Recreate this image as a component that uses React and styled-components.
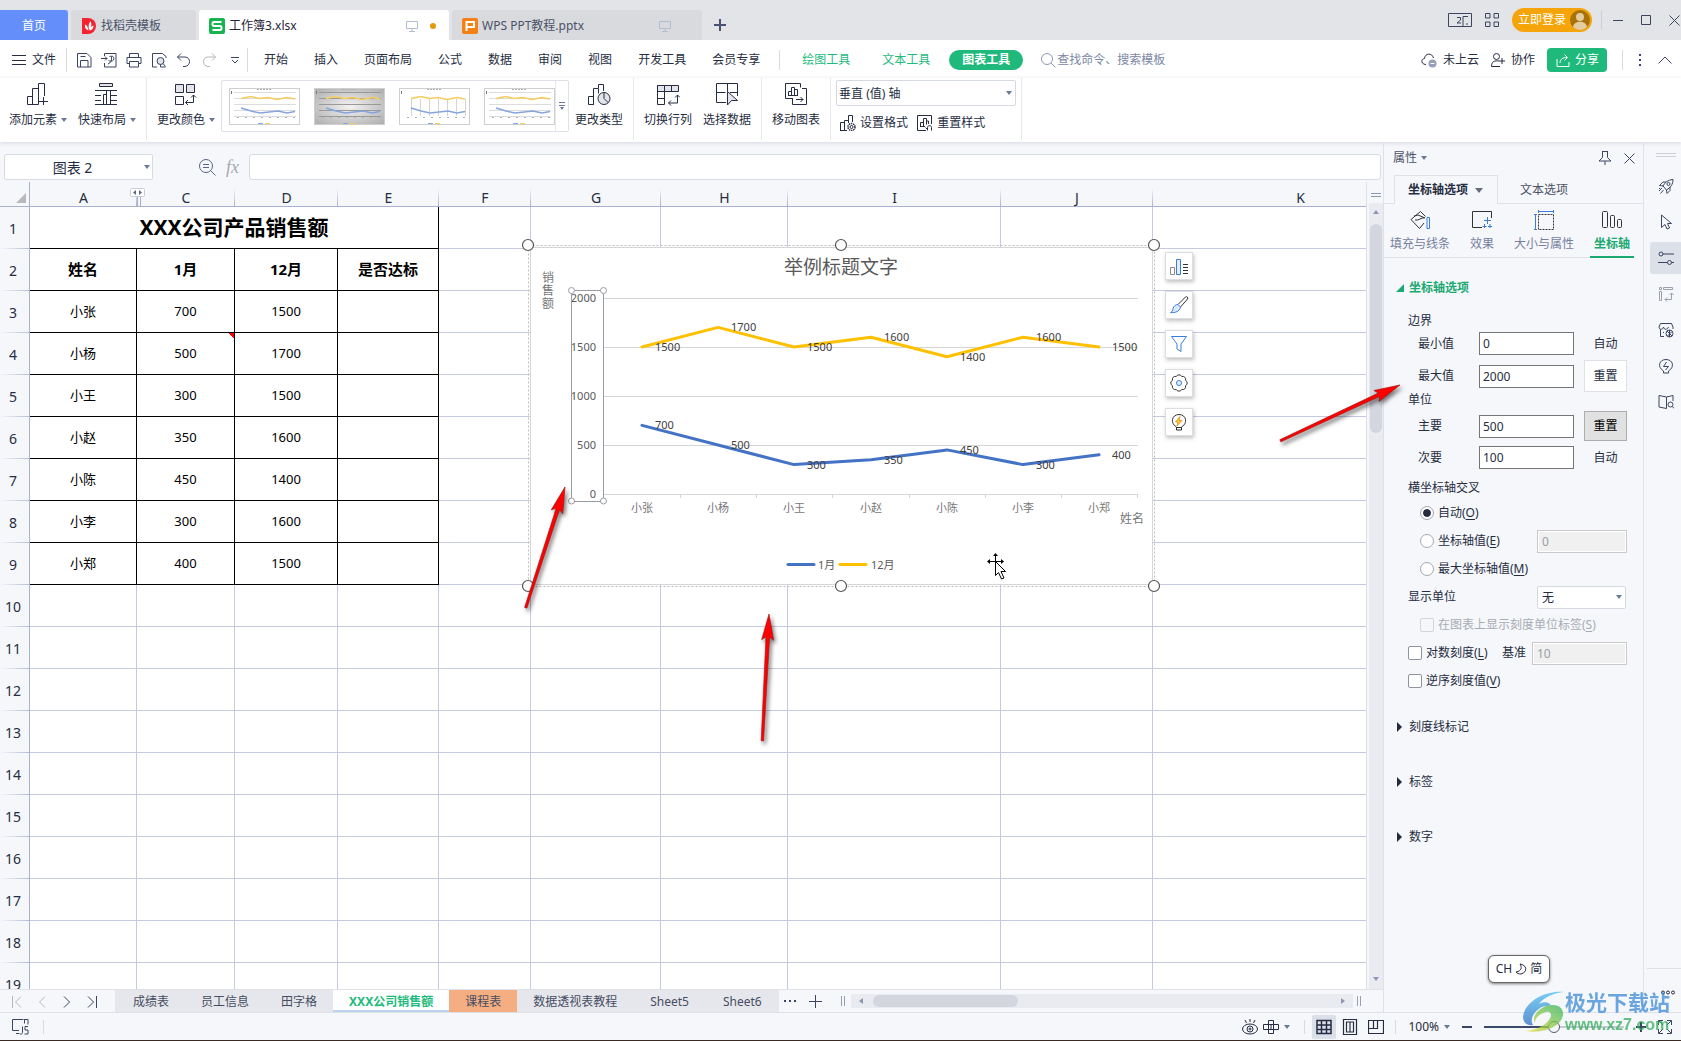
import React, { useState } from 'react'
import styled, { createGlobalStyle, css } from 'styled-components'

const columns = [
  { name: 'A', width: 107 },
  { name: 'C', width: 98 },
  { name: 'D', width: 103 },
  { name: 'E', width: 101 },
  { name: 'F', width: 92 },
  { name: 'G', width: 130 },
  { name: 'H', width: 127 },
  { name: 'I', width: 213 },
  { name: 'J', width: 152 },
  { name: 'K', width: 295 }
]

const people = [
  { name: '小张', jan: 700, dec: 1500 },
  { name: '小杨', jan: 500, dec: 1700, note: true },
  { name: '小王', jan: 300, dec: 1500 },
  { name: '小赵', jan: 350, dec: 1600 },
  { name: '小陈', jan: 450, dec: 1400 },
  { name: '小李', jan: 300, dec: 1600 },
  { name: '小郑', jan: 400, dec: 1500 }
]

const menus = [
  '开始',
  '插入',
  '页面布局',
  '公式',
  '数据',
  '审阅',
  '视图',
  '开发工具',
  '会员专享'
]

const sheets = [
  '成绩表',
  '员工信息',
  '田字格',
  'XXX公司销售额',
  '课程表',
  '数据透视表教程',
  'Sheet5',
  'Sheet6'
]

/* ---------- icons ---------- */

const Icon = ({ w = 16, h = w, children, ...rest }) => (
  <svg
    width={w}
    height={h}
    viewBox={`0 0 ${w} ${h}`}
    fill="none"
    stroke="currentColor"
    aria-hidden="true"
    {...rest}
  >
    {children}
  </svg>
)

const Caret = () => (
  <Icon w={6} h={4}>
    <path d="M0 0h6L3 4z" fill="#6b7896" stroke="none" />
  </Icon>
)

const MonitorIcon = () => (
  <Icon w={12} h={12} color="#b4bcd3">
    <path d="M.5 1.5h11v7H.5zM6 8.5v3M3 11.5h6" />
  </Icon>
)

const quickIcons = [
  {
    label: '保存',
    art: (
      <>
        <path d="M1.5 15V1.5H11L15 5.5V15z" />
        <path d="M4.5 15V8.5h7.5V15M4.5 4.5h5" />
      </>
    )
  },
  {
    label: '输出为PDF',
    art: (
      <>
        <path d="M3.5 4V1.5H15v13.5H3.5V11M0 6.5h6M4 4.5l2 2-2 2" />
        <path d="M7 12c3-1 4-4 3.5-7.5M8.5 4.5c4-1 5 1 4 3.5-1 1.5-4 1.5-5 .5" />
      </>
    )
  },
  {
    label: '打印',
    art: (
      <>
        <path d="M3.5 5.5V1.5h9v4M3.5 11.5h-2.5v-6h14v6h-2.5" />
        <path d="M3.5 9.5h9V15h-9z" />
      </>
    )
  },
  {
    label: '打印预览',
    art: (
      <>
        <path d="M6 15H1.5V1.5h10L15 4.5V6" />
        <circle cx="9.5" cy="9" r="3.5" fill="#dfe2e8" />
        <path d="M12 11.5l2.5 3M9.5 12.5v2.5h5" />
      </>
    )
  },
  {
    label: '撤销',
    art: <path d="M5 1.5L1.5 5 5 8.5M1.5 5H9c6 0 6 9 0 9.5H7" />
  },
  {
    label: '恢复',
    faded: true,
    art: <path d="M11 1.5L14.5 5 11 8.5M14.5 5H7c-6 0-6 9 0 9.5h2" />
  }
]

const ribbonIcons = {
  add: (
    <path d="M1.5 22.5v-8h5M6.5 22.5v-16H13M1.5 22.5h11M12.5 22.5v-21h6V14M17.5 15v8M13 19.5h9" />
  ),
  layout: (
    <>
      <path d="M4.5 1.5h13v3h-13z" fill="#e3e5ea" />
      <path d="M0 8.5h22M0 13.5h6M16 13.5h6M0 18.5h6M16 18.5h6M0 22.5h22M8.5 22V12.5h3V22M11.5 22V8.5h4V22" />
    </>
  ),
  color: (
    <>
      <path d="M1.5 2.5h8v8h-8zM12.5 2.5h8v8h-8z" fill="#e3e5ea" />
      <path d="M1.5 14.5h8v8h-8zM19.5 13v7.5h-8M17 15.5l2.5-2.5 2.5 2.5M14 18l-2.5 2.5L14 23" />
    </>
  ),
  type: (
    <>
      <path d="M1.5 22.5v-8h5v8zM6.5 22.5v-16h5v5M11.5 6V2.5h5V9" />
      <circle cx="17" cy="16.5" r="6" fill="#e3e5ea" />
      <path d="M17 10.5v6l4 4" />
    </>
  ),
  swap: (
    <>
      <path d="M1.5 3.5h21v6h-21z" fill="#e3e5ea" />
      <path d="M8.5 3.5v19h-7v-19M15.5 3.5v6M1.5 16.5h7M21.5 13v8h-9M19 15.5l2.5-2.5 2.5 2.5M15 18.5l-2.5 2.5 2.5 2.5" />
    </>
  ),
  pick: (
    <>
      <path d="M11 20.5H1.5v-19h21V14M12.5 1.5v8M1.5 10.5h9M15 10.5h7.5" />
      <path d="M12.5 9.5v13.5l4-4.5h6z" fill="#e3e5ea" />
    </>
  ),
  move: (
    <>
      <path d="M9 16.5H1.5v-15h15v4M18 6.5h4.5v16h-14v-6M12 17.5h7M16.5 15l2.5 2.5L16.5 20" />
      <path d="M4.5 13.5V9.5h3v4M7.5 13.5v-8h3v8M10.5 13.5v-6h3v6M4 13.5h10" />
    </>
  )
}

const railIcons = [
  {
    label: '快捷',
    art: (
      <>
        <path d="M5 8c2-4 5-6 10-6.5 0 5-2.5 8-6.5 10.5L5 8zM5 8L1.5 7.5 5 4h3M8.5 12l.5 3.5 3-3V9" />
        <circle cx="10.5" cy="6" r="1.5" />
        <path d="M4 10l-3 3M5.5 12l-3 3.5M2 10l-1 1" />
      </>
    )
  },
  {
    label: '选择',
    art: <path d="M3.5 1v12.5L7 10.5l2 4.5 2.5-1-2-4.5h4z" />
  },
  {
    label: '属性',
    active: true,
    art: (
      <>
        <circle cx="3" cy="4" r="2" />
        <circle cx="11.5" cy="12.5" r="2" />
        <path d="M5 4h11M0 12.5h9.5M13.5 12.5H16" />
      </>
    )
  },
  {
    label: '分析',
    faded: true,
    art: (
      <path d="M1.5 1.5h2v2h-2zM5.5 1.5h9v2h-9zM1.5 5.5h2v9h-2zM13.5 7v6.5H7M11.5 9l2-2 2 2M9 11.5l-2 2 2 2" />
    )
  },
  {
    label: '素材',
    art: (
      <>
        <path d="M6 14.5H2.5v-7M1 5l1.5-3.5h11L15 5v2M1 5c0 3 4 3 4.5 0 .5 3 4 3 5 0M5 10.5h1" />
        <circle cx="11.5" cy="11.5" r="3.5" />
        <path d="M9 9l5 5M14 9.5l-4.5 4.5M11.5 8v7" />
      </>
    )
  },
  {
    label: '智能',
    art: (
      <>
        <path d="M5.5 13C-1 9 1 1.5 8 1.5S17 9 10.5 13v2h-5z" />
        <path d="M8.5 4L5.5 8.5h5L7.5 12" />
      </>
    )
  },
  {
    label: '帮助',
    art: (
      <>
        <path d="M8.5 14.5L1 13V1.5l7.5 1.5V14.5M8.5 3l6.5-1.5V7" />
        <circle cx="12.5" cy="10.5" r="2.5" />
        <path d="M14.5 12.5l1.5 2" />
      </>
    )
  }
]

const floatTools = [
  {
    label: '图表元素',
    art: (
      <>
        <path d="M1.5 11.5h4v7h-4z" stroke="#8b8b8b" />
        <path d="M7.5 3.5h4v15h-4z" stroke="#3b7ddb" fill="#e4eefb" />
        <path d="M14 8.5h5M14 11.5h5M14 14.5h5M14 17.5h5" stroke="#333" />
      </>
    )
  },
  {
    label: '图表样式',
    art: (
      <>
        <path d="M9 9.5L16.5 2c1.5-1 3 .5 2 2L11.5 12" stroke="#333" />
        <path
          d="M9 9.5l2.5 2.5c-1 4.5-5 6-10 5.5 2-1 2-2 2.5-4 1-3 3-4 5-4z"
          stroke="#3b7ddb"
          fill="#dbe8fa"
        />
      </>
    )
  },
  {
    label: '图表筛选器',
    art: <path d="M2.5 2.5h15L12 10v7.5l-4-2.5v-5z" stroke="#3b7ddb" />
  },
  {
    label: '设置',
    art: (
      <>
        <path
          d="M16.5 12.7A3 3 0 0112.7 16.5A3 3 0 017.3 16.5A3 3 0 013.5 12.7A3 3 0 013.5 7.3A3 3 0 017.3 3.5A3 3 0 0112.7 3.5A3 3 0 0116.5 7.3A3 3 0 0116.5 12.7z"
          stroke="#333"
        />
        <circle cx="10" cy="10" r="2.5" stroke="#3b7ddb" fill="#e4eefb" />
      </>
    )
  },
  {
    label: '智能推荐',
    art: (
      <>
        <path d="M7.5 15C1 11.5 2.5 2.5 10 2.5S19 11.5 12.5 15v3h-5zM7.5 15.5h5" stroke="#333" />
        <path d="M11 4.5L6.5 10H9l-1 4 5-5.5h-3z" fill="#ffc83d" stroke="#d98a00" strokeWidth=".7" />
      </>
    )
  }
]

/* ---------- chart ---------- */

const pointX = i => 642 + Math.round(i * 76.2)
const valueY = v => 494 - (v * 49) / 500

const line = key =>
  people.map((p, i) => `${pointX(i)},${valueY(p[key])}`).join(' ')

const SalesChart = () => (
  <Chart viewBox="520 237 642 357" width="642" height="357" role="img" aria-label="举例标题文字">
    <rect x="528.5" y="245.5" width="626" height="341" fill="none" stroke="#bdbdc4" strokeDasharray="2 2" />
    <rect x="530.5" y="247.5" width="622" height="337" fill="#fff" stroke="#d6d6d6" />
    <text x="841" y="274" fontSize="19" textAnchor="middle">举例标题文字</text>
    {['销', '售', '额'].map((c, i) => (
      <text key={c} x="548" y={282 + i * 13} fontSize="12" textAnchor="middle" fill="#777">
        {c}
      </text>
    ))}
    {[2000, 1500, 1000, 500, 0].map((v, i) => (
      <g key={v}>
        <path d={`M604 ${298.5 + i * 49}H1138`} stroke="#d6d6d6" />
        <text x="596" y={302 + i * 49} textAnchor="end">{v}</text>
      </g>
    ))}
    {[680, 756, 832, 909, 985, 1061, 1137].map(x => (
      <path key={x} d={`M${x + 0.5} 494v4`} stroke="#d6d6d6" />
    ))}
    <g fill="none" strokeWidth="3" strokeLinecap="round" strokeLinejoin="round">
      <polyline points={line('dec')} stroke="#ffc000" />
      <polyline points={line('jan')} stroke="#4472c4" />
    </g>
    {people.map((p, i) => (
      <g key={p.name}>
        <text x={pointX(i) + 13} y={valueY(p.dec) + 4} fill="#404040">{p.dec}</text>
        <text x={pointX(i) + 13} y={valueY(p.jan) + 4} fill="#404040">{p.jan}</text>
        <text x={pointX(i)} y="512" textAnchor="middle" fill="#777">{p.name}</text>
      </g>
    ))}
    <text x="1120" y="523" fontSize="12" fill="#777">姓名</text>
    <g strokeWidth="3" strokeLinecap="round">
      <path d="M788 564.5h26" stroke="#4472c4" />
      <path d="M840 564.5h26" stroke="#ffc000" />
    </g>
    <text x="818" y="569">1月</text>
    <text x="871" y="569">12月</text>
    <g fill="#fff" stroke="#9a9aa2">
      <rect x="571.5" y="290.5" width="32" height="211" fill="none" />
      <circle cx="571.5" cy="290.5" r="3" />
      <circle cx="603.5" cy="290.5" r="3" />
      <circle cx="571.5" cy="501" r="3" />
      <circle cx="603.5" cy="501" r="3" />
    </g>
    <g fill="#fff" stroke="#555" strokeWidth="1.2">
      {[528, 841, 1154].map(x => (
        <g key={x}>
          <circle cx={x} cy="245" r="5.5" />
          <circle cx={x} cy="586" r="5.5" />
        </g>
      ))}
    </g>
    {/* move pointer */}
    <path d="M988 561.5h15M995.5 554v13" stroke="#000" />
    <path
      d="M987 561.5l3-2.5v5zM1004 561.5l-3-2.5v5zM995.5 553l-2.5 3h5z"
      fill="#000"
    />
    <path
      d="M995.5 561.5v14l3-3 3 6.5 2.5-1-3-6.5h4.5z"
      fill="#fff"
      stroke="#000"
    />
  </Chart>
)

const RedArrow = ({ x, y, length, angle }) => (
  <path
    transform={`translate(${x} ${y}) rotate(${angle})`}
    d={`M0 0L-26 6L-23 1.8L${-length} 1.2V-1.2L-23 -1.8L-26 -6Z`}
  />
)

const MiniChart = ({ dark, bars }) => (
  <Icon w={71} h={37}>
    <defs>
      <radialGradient id="shade" r=".8">
        <stop offset="0" stopColor="#f2f2f2" />
        <stop offset="1" stopColor="#a3a3a3" />
      </radialGradient>
    </defs>
    <rect x=".5" y=".5" width="70" height="36" fill={dark ? 'url(#shade)' : '#fff'} stroke="#cfcfcf" />
    {bars ? (
      <path d="M12.5 11v17M21.5 11v17M30.5 11v17M39.5 11v17M48.5 11v17M57.5 11v17M66.5 11v17" stroke="#d5d5d5" />
    ) : (
      <path d="M5 4.5h62M5 10.5h62M5 16.5h62M5 22.5h62M5 28.5h62" stroke={dark ? '#9a9a9a' : '#dcdcdc'} />
    )}
    <path d="M28 1.5h14" stroke="#b0b0b0" strokeDasharray="2 1" />
    <path d="M2.5 3v3" stroke="#777" />
    <path d="M12 10.5l10-2 8 2 9-1 9 2 10-2 8 1.5" stroke="#f6cd5c" strokeWidth="1.5" />
    <path d="M12 20l10 3 9 2 9-1 9-1 9 2 8-1.5" stroke="#86a5dc" strokeWidth="1.5" />
    <path d="M8 29.5h58" stroke="#b0b0b0" strokeDasharray="2 6" />
    <path d="M29 35.5h5" stroke="#86a5dc" />
    <path d="M36 35.5h5" stroke="#f6cd5c" />
  </Icon>
)

/* ---------- regions ---------- */

const TitleBar = () => (
  <Title>
    <HomeTab>首页</HomeTab>
    <FileTab $width={125}>
      <Icon w={16}>
        <path d="M1 0h6a8 8 0 010 16H1z" fill="#f5232f" stroke="none" />
        <path d="M7.5 12.5C3.5 11 4 8 4 6.5c2 .5 3 2.5 3.5 6zM8 12C7 8 8 5 9.5 3c1.5 3 1 6-1.5 9zM8.5 12.5c.5-3 2-4.5 4-5 0 3-1.5 4.5-4 5z" fill="#fff" stroke="none" />
      </Icon>
      <span>找稻壳模板</span>
    </FileTab>
    <FileTab $width={250} $active>
      <Icon w={16}>
        <rect width="16" height="16" rx="2" fill="#17b34f" stroke="none" />
        <path d="M12.5 4H5C3 4 3 8 5 8h6c2 0 2 4 0 4H3.5" stroke="#fff" strokeWidth="2" />
      </Icon>
      <span>工作簿3.xlsx</span>
      <TabEnd>
        <MonitorIcon />
        <UnsavedDot />
      </TabEnd>
    </FileTab>
    <FileTab $width={250}>
      <Icon w={16}>
        <rect width="16" height="16" rx="2" fill="#f58013" stroke="none" />
        <path d="M4.5 13V4H12v5H5" stroke="#fff" strokeWidth="2" />
      </Icon>
      <span>WPS PPT教程.pptx</span>
      <TabEnd>
        <MonitorIcon />
        <DotSpace />
      </TabEnd>
    </FileTab>
    <NewTab aria-label="新建">
      <Icon w={12} strokeWidth="2">
        <path d="M6 0v12M0 6h12" />
      </Icon>
    </NewTab>
    <WindowTools>
      <IconButton aria-label="窗口数">
        <Icon w={24} h={14}>
          <path d="M15 13.5H.5V.5h23v13H15V3.5h5" />
          <path d="M9 4.5h3.5V7L9 10h4M18 11h2" />
        </Icon>
      </IconButton>
      <IconButton aria-label="应用">
        <Icon w={14}>
          <path d="M.5.5H5V5H.5zM9 .5h4.5V5H9zM.5 9H5v4.500H.5zM9 9h4.500v4.500H9z" />
        </Icon>
      </IconButton>
      <Login>
        立即登录
        <Icon w={20}>
          <circle cx="10" cy="10" r="10" fill="#a97208" stroke="none" />
          <circle cx="10" cy="7" r="4" fill="#e3cda0" stroke="none" />
          <path d="M3 17c1-7 13-7 14 0-4 4-10 4-14 0z" fill="#e3cda0" stroke="none" />
        </Icon>
      </Login>
      <WindowButtons>
        <IconButton aria-label="最小化">
          <Icon w={10}>
            <path d="M0 5.5h10" />
          </Icon>
        </IconButton>
        <IconButton aria-label="最大化">
          <Icon w={10}>
            <path d="M.5.5h9v9h-9z" />
          </Icon>
        </IconButton>
        <IconButton aria-label="关闭">
          <Icon w={11}>
            <path d="M.5.5l10 10M10.5.5l-10 10" />
          </Icon>
        </IconButton>
      </WindowButtons>
    </WindowTools>
  </Title>
)

const MenuBar = () => (
  <Menu>
    <MenuButton>
      <Icon w={14} h={12}>
        <path d="M0 1.5h14M0 6.5h14M0 10.5h14" />
      </Icon>
      文件
    </MenuButton>
    <Divider $height={24} />
    <QuickAccess>
      {quickIcons.map(q => (
        <IconButton key={q.label} aria-label={q.label} $faded={q.faded}>
          <Icon w={16}>{q.art}</Icon>
        </IconButton>
      ))}
    </QuickAccess>
    <IconButton aria-label="更多">
      <Icon w={8}>
        <path d="M0 1.5h8M1 4l3 3 3-3" />
      </Icon>
    </IconButton>
    <Divider $height={24} />
    <MenuItems>
      {menus.map(m => (
        <MenuItem key={m}>{m}</MenuItem>
      ))}
    </MenuItems>
    <Divider $height={20} />
    <ContextItems>
      <MenuItem $green>绘图工具</MenuItem>
      <MenuItem $green>文本工具</MenuItem>
    </ContextItems>
    <ActiveMenu>图表工具</ActiveMenu>
    <Search>
      <Icon w={15}>
        <circle cx="6" cy="6" r="5.5" />
        <path d="M10 10l4.5 4.5" />
      </Icon>
      <input placeholder="查找命令、搜索模板" aria-label="查找命令" />
    </Search>
    <MenuRight>
      <MenuButton>
        <Icon w={16}>
          <path d="M5 12.5C0 12.5-.5 7 3.5 6.5 4 1 11 .5 12.5 6" />
          <circle cx="11.5" cy="11.5" r="4" fill="#98a0b8" stroke="none" />
          <path d="M9.5 11.5h4" stroke="#fff" />
        </Icon>
        未上云
      </MenuButton>
      <MenuButton>
        <Icon w={14}>
          <circle cx="5.5" cy="3.5" r="3" />
          <path d="M9 13.5H.5C.5 8 4 7.5 8 8M11 5v6M8 8h6" />
        </Icon>
        协作
      </MenuButton>
      <Share>
        <Icon w={14}>
          <path d="M1 6v7.5h12V9M4 10c0-4 3-5.5 7-5.5M8.5 1.5l3 3-3 3" />
        </Icon>
        分享
      </Share>
      <Divider $height={20} />
      <IconButton aria-label="更多选项">
        <Icon w={2} h={14}>
          <path d="M1 1v2M1 6v2M1 11v2" strokeWidth="2" />
        </Icon>
      </IconButton>
      <IconButton aria-label="收起功能区">
        <Icon w={14} h={8}>
          <path d="M.5 7.5l6.5-6.5 6.5 6.5" />
        </Icon>
      </IconButton>
    </MenuRight>
  </Menu>
)

const RibbonButton = ({ icon, label, menu }) => (
  <BigButton>
    <Icon w={24}>{ribbonIcons[icon]}</Icon>
    <span>
      {label}
      {menu && <Caret />}
    </span>
  </BigButton>
)

const RibbonBar = () => (
  <Ribbon>
    <RibbonGroup>
      <RibbonButton icon="add" label="添加元素" menu />
      <RibbonButton icon="layout" label="快速布局" menu />
    </RibbonGroup>
    <RibbonGroup $tight>
      <RibbonButton icon="color" label="更改颜色" menu />
      <Gallery>
        <MiniChart />
        <MiniChart dark />
        <MiniChart bars />
        <MiniChart />
        <GalleryMore aria-label="更多样式">
          <Icon w={6} h={8}>
            <path d="M0 .5h6M0 3.5h6" />
            <path d="M1 5h4L3 8z" fill="currentColor" stroke="none" />
          </Icon>
        </GalleryMore>
      </Gallery>
      <RibbonButton icon="type" label="更改类型" />
    </RibbonGroup>
    <RibbonGroup>
      <RibbonButton icon="swap" label="切换行列" />
      <RibbonButton icon="pick" label="选择数据" />
    </RibbonGroup>
    <RibbonGroup>
      <RibbonButton icon="move" label="移动图表" />
    </RibbonGroup>
    <FormatGroup>
      <SelectBox $height={26}>
        <select aria-label="图表元素" defaultValue="v">
          <option value="v">垂直 (值) 轴</option>
        </select>
        <Caret />
      </SelectBox>
      <FormatRow>
        <button>
          <Icon w={16}>
            <path d="M.5 15.5v-8h4v8zM4.5 15.5V5.5h4M8.5 8V.5h4V7M0 15.5h7" />
            <circle cx="11.5" cy="12" r="3.5" strokeWidth="1.5" strokeDasharray="1.5 .7" />
            <circle cx="11.5" cy="12" r="1.5" />
          </Icon>
          设置格式
        </button>
        <button>
          <Icon w={16}>
            <path d="M9 15.5H.5V.5h14V9M3.5 11.5V7.5h3v4zM6.5 11.5v-8h3v6M9.5 6h2v3M3 11.5h5M10.5 15.5v-3c0-2.5 4-2.5 4 0v3M8.5 12.5l2 2" />
          </Icon>
          重置样式
        </button>
      </FormatRow>
    </FormatGroup>
  </Ribbon>
)

const SheetGrid = () => (
  <GridArea>
    <Table>
      <colgroup>
        <Col $width={30} />
        {columns.map(c => (
          <Col key={c.name} $width={c.width} />
        ))}
      </colgroup>
      <thead>
        <tr>
          <Corner>
            <Icon w={10}>
              <path d="M10 0v10H0z" fill="#b9b9bd" stroke="none" />
            </Icon>
          </Corner>
          {columns.map(c => (
            <ColHead key={c.name} scope="col">
              {c.name}
              {c.name === 'C' && (
                <HiddenMark>
                  <Icon w={15} h={19}>
                    <path d="M7.5 9v10M10.5 9v10" stroke="#a8b1cf" />
                    <rect x=".5" y=".5" width="14" height="8" rx="1" fill="#fff" stroke="#c9cdd8" />
                    <path d="M6 2v5L3 4.5zM9 2v5l3-2.5z" fill="#5b6888" stroke="none" />
                  </Icon>
                </HiddenMark>
              )}
            </ColHead>
          ))}
        </tr>
      </thead>
      <tbody>
        {Array.from({ length: 19 }, (_, i) => {
          const person = people[i - 2]
          return (
            <tr key={i}>
              <RowHead scope="row">{i + 1}</RowHead>
              {i === 0 && (
                <Cell $ink $size="title" colSpan={4}>
                  XXX公司产品销售额
                </Cell>
              )}
              {i === 1 &&
                ['姓名', '1月', '12月', '是否达标'].map(t => (
                  <Cell key={t} $ink $size="head">{t}</Cell>
                ))}
              {person && (
                <>
                  <Cell $ink>{person.name}</Cell>
                  <Cell $ink $note={person.note}>{person.jan}</Cell>
                  <Cell $ink>{person.dec}</Cell>
                  <Cell $ink />
                </>
              )}
              {columns.slice(i < 9 ? 4 : 0).map(c => (
                <Cell key={c.name} />
              ))}
            </tr>
          )
        })}
      </tbody>
    </Table>
    <SalesChart />
    <FloatTools>
      {floatTools.map(t => (
        <button key={t.label} aria-label={t.label}>
          <Icon w={20}>{t.art}</Icon>
        </button>
      ))}
    </FloatTools>
  </GridArea>
)

const SheetBar = () => (
  <Sheets>
    <SheetNav>
      <IconButton aria-label="第一张" $faded>
        <Icon w={10} h={12}><path d="M.5 0v12M9 .5L3.5 6 9 11.5" /></Icon>
      </IconButton>
      <IconButton aria-label="上一张" $faded>
        <Icon w={10} h={12}><path d="M8 .5L2.5 6 8 11.5" /></Icon>
      </IconButton>
      <IconButton aria-label="下一张">
        <Icon w={10} h={12}><path d="M2 .5L7.5 6 2 11.5" /></Icon>
      </IconButton>
      <IconButton aria-label="最后一张">
        <Icon w={10} h={12}><path d="M1 .5L6.5 6 1 11.5M9.5 0v12" /></Icon>
      </IconButton>
    </SheetNav>
    <SheetTabs>
      {sheets.map((s, i) => (
        <SheetTab key={s} $active={i === 3} $orange={i === 4} $wide={i > 5}>
          {s}
        </SheetTab>
      ))}
    </SheetTabs>
    <SheetActions>
      <Icon w={12} h={2}>
        <path d="M0 1h2M5 1h2M10 1h2" strokeWidth="2" />
      </Icon>
      <IconButton aria-label="新建工作表">
        <Icon w={13}><path d="M6.5 0v13M0 6.5h13" /></Icon>
      </IconButton>
      <Grip />
    </SheetActions>
    <HScroll>
      <Icon w={4} h={6}><path d="M4 0v6L0 3z" fill="#8d96b4" stroke="none" /></Icon>
      <HThumb />
      <Icon w={4} h={6}><path d="M0 0v6l4-3z" fill="#8d96b4" stroke="none" /></Icon>
    </HScroll>
    <Grip />
  </Sheets>
)

const Field = ({ id, label, value, children }) => (
  <>
    <label htmlFor={id}>{label}</label>
    <NumberInput id={id} defaultValue={value} />
    {children}
  </>
)

const PropertiesPanel = () => {
  const [cross, setCross] = useState('auto')

  return (
    <Panel>
      <PanelHead>
        <button>
          属性
          <Caret />
        </button>
        <PanelHeadIcons>
          <Icon w={14} h={14}>
            <path d="M4 .5h6M4.5.5v6L1 10h12L9.5 6.5v-6M7 10v4" />
          </Icon>
          <Icon w={11}>
            <path d="M.5.5l10 10M10.5.5l-10 10" />
          </Icon>
        </PanelHeadIcons>
      </PanelHead>
      <PanelTabs>
        <PanelTab $active>
          坐标轴选项
          <Icon w={8} h={5}>
            <path d="M0 0h8L4 5z" fill="#666c7a" stroke="none" />
          </Icon>
        </PanelTab>
        <PanelTab>文本选项</PanelTab>
      </PanelTabs>
      <SubTabs>
        <SubTab>
          <Icon w={20} h={20} stroke="#333">
            <path d="M10.5 1.5L1 9.5l8.500 9L14 13M4 6l4-1 7 3M10.5 1.5l5 5M5 10c4 1 6-3 9.500-2" />
            <path d="M17 7.5h2.500v11H17z" stroke="#3b7ddb" />
          </Icon>
          填充与线条
        </SubTab>
        <SubTab>
          <Icon w={20} h={20} stroke="#333">
            <path d="M19.5 8V1.5H.5v16H10" />
            <path d="M15.5 7v7M12 10.5h7M12.5 14v4M10.5 16.5h4M18 14v4M16 16.5h4" stroke="#3b7ddb" />
          </Icon>
          效果
        </SubTab>
        <SubTab>
          <Icon w={20} h={20} stroke="#333">
            <path d="M4.5 4.5h15v15h-15z" strokeDasharray="2 1" />
            <path d="M4.5 0v3M19.5 0v3M4.5 1.5h15M0 4.5h3M0 19.5h3M1.5 4.5v15" stroke="#3b7ddb" />
          </Icon>
          大小与属性
        </SubTab>
        <SubTab $active>
          <Icon w={20} h={20} stroke="#333">
            <rect x=".5" y="1.5" width="5" height="16" rx="1" />
            <rect x="8.5" y="5.5" width="4" height="12" rx="1" />
            <rect x="15.5" y="9.5" width="4" height="8" rx="1" />
          </Icon>
          坐标轴
        </SubTab>
      </SubTabs>
      <SectionTitle $open>
        <Icon w={8}><path d="M8 0v8H0z" fill="#1ba971" stroke="none" /></Icon>
        坐标轴选项
      </SectionTitle>
      <PanelBody>
        <GroupTitle>边界</GroupTitle>
        <FieldGrid>
          <Field id="min" label="最小值" value="0">
            <span>自动</span>
          </Field>
          <Field id="max" label="最大值" value="2000">
            <Reset $height={32}>重置</Reset>
          </Field>
        </FieldGrid>
        <GroupTitle>单位</GroupTitle>
        <FieldGrid>
          <Field id="major" label="主要" value="500">
            <Reset $height={30} $pressed>重置</Reset>
          </Field>
          <Field id="minor" label="次要" value="100">
            <span>自动</span>
          </Field>
        </FieldGrid>
        <CrossTitle>横坐标轴交叉</CrossTitle>
        <OptionRow $indent>
          <Option>
            <Radio name="cross" checked={cross === 'auto'} onChange={() => setCross('auto')} />
            <span>自动(<u>O</u>)</span>
          </Option>
        </OptionRow>
        <OptionRow $indent>
          <Option>
            <Radio name="cross" checked={cross === 'value'} onChange={() => setCross('value')} />
            <span>坐标轴值(<u>E</u>)</span>
          </Option>
          <DisabledInput $width={90} aria-label="坐标轴值" defaultValue="0" disabled />
        </OptionRow>
        <OptionRow $indent>
          <Option>
            <Radio name="cross" checked={cross === 'max'} onChange={() => setCross('max')} />
            <span>最大坐标轴值(<u>M</u>)</span>
          </Option>
        </OptionRow>
        <OptionRow>
          <label htmlFor="unit">显示单位</label>
          <UnitSelect $height={23}>
            <select id="unit" defaultValue="none">
              <option value="none">无</option>
            </select>
            <Caret />
          </UnitSelect>
        </OptionRow>
        <OptionRow $indent>
          <Option $disabled>
            <Check disabled />
            <span>在图表上显示刻度单位标签(<u>S</u>)</span>
          </Option>
        </OptionRow>
        <OptionRow>
          <Option>
            <Check />
            <span>对数刻度(<u>L</u>)</span>
          </Option>
          <BaseLabel>
            基准
            <DisabledInput $width={95} defaultValue="10" disabled />
          </BaseLabel>
        </OptionRow>
        <OptionRow>
          <Option>
            <Check />
            <span>逆序刻度值(<u>V</u>)</span>
          </Option>
        </OptionRow>
      </PanelBody>
      <Folded>
        {['刻度线标记', '标签', '数字'].map(t => (
          <SectionTitle key={t}>
            <Icon w={8} h={10}><path d="M1 0v10l5-5z" fill="#222a3c" stroke="none" /></Icon>
            {t}
          </SectionTitle>
        ))}
      </Folded>
    </Panel>
  )
}

const StatusBar = () => (
  <Status>
    <IconButton aria-label="宏">
      <Icon w={17} h={16}>
        <path d="M7 11.5H.5V.5h11M12 .5h4v5M12.5.5v4M4 14.5h3M10.5 7.5v6c0 2-2 2-3 1M16 7.5h-3v3.5h3v4h-3.5" />
      </Icon>
    </IconButton>
    <Divider $height={14} />
    <StatusRight>
      <EyeCare>
        <Icon w={16}>
          <ellipse cx="8" cy="10" rx="7.5" ry="5" />
          <circle cx="8" cy="10" r="3" />
          <circle cx="8" cy="10" r="1" />
          <path d="M8 0v3M3 1l1.5 3M13 1l-1.5 3" />
        </Icon>
        <Icon w={16}>
          <path d="M5.5 1.5h5v13h-5zM.5 5.5h15v5H.5zM8 5.5v5" />
        </Icon>
        <Caret />
      </EyeCare>
      <Divider $height={14} />
      <ViewButton $active aria-label="普通视图">
        <Icon w={16} strokeWidth="1.5">
          <path d="M1 1.5h14v13H1zM1 6h14M1 10.5h14M5.5 1.5v13M10.5 1.5v13" />
        </Icon>
      </ViewButton>
      <ViewButton aria-label="分页预览">
        <Icon w={16} strokeWidth="1.2">
          <path d="M1.5.5h13v15h-13zM4.5 3h7v10h-7zM8 3v10" />
        </Icon>
      </ViewButton>
      <ViewButton aria-label="阅读布局">
        <Icon w={16} strokeWidth="1.2">
          <path d="M.5 1.5h15v13H.5zM.5 9.5h9v-8M5.5 1.5v8" />
        </Icon>
      </ViewButton>
      <Divider $height={14} />
      <ZoomValue>
        100%
        <Caret />
      </ZoomValue>
      <IconButton aria-label="缩小">
        <Icon w={10} strokeWidth="2"><path d="M0 5h10" /></Icon>
      </IconButton>
      <Zoom aria-label="缩放" defaultValue="50" />
      <IconButton aria-label="放大">
        <Icon w={10} strokeWidth="2"><path d="M0 5h10M5 0v10" /></Icon>
      </IconButton>
      <IconButton aria-label="全屏">
        <Icon w={14}>
          <path d="M.5 5V.5H5M9 .5h4.5V5M13.5 9v4.5H9M5 13.5H.5V9M1 1l4 4M13 1L9 5M13 13L9 9M1 13l4-4" />
        </Icon>
      </IconButton>
    </StatusRight>
  </Status>
)

const App = () => (
  <Page>
    <Global />
    <TitleBar />
    <MenuBar />
    <RibbonBar />
    <Body>
      <Workbook>
        <FormulaBar>
          <NameBox>
            <input aria-label="名称框" defaultValue="图表 2" />
            <Caret />
          </NameBox>
          <FxTools>
            <Icon w={17}>
              <circle cx="7" cy="7" r="6.5" />
              <path d="M11.5 11.5l5 5M4 5.5h6M4 8.5h6" />
            </Icon>
            <i>fx</i>
          </FxTools>
          <FormulaInput aria-label="编辑栏" />
        </FormulaBar>
        <Workspace>
          <SheetGrid />
          <VScroll>
            <Icon w={10} h={4}><path d="M0 .5h10M0 3.5h10" /></Icon>
            <VTrack>
              <Icon w={6} h={4}><path d="M3 0l3 4H0z" fill="#8d96b4" stroke="none" /></Icon>
              <VThumb />
              <Icon w={6} h={4}><path d="M0 0h6L3 4z" fill="#8d96b4" stroke="none" /></Icon>
            </VTrack>
          </VScroll>
        </Workspace>
        <SheetBar />
      </Workbook>
      <PropertiesPanel />
      <Rail>
        <RailHandle />
        {railIcons.map(r => (
          <RailButton key={r.label} aria-label={r.label} $active={r.active} $faded={r.faded}>
            <Icon w={16}>{r.art}</Icon>
          </RailButton>
        ))}
        <RailFoot>
          <Icon w={14} h={5}>
            <circle cx="2" cy="2.5" r="1.5" />
            <circle cx="7" cy="2.5" r="1.5" />
            <circle cx="12" cy="2.5" r="1.5" />
          </Icon>
        </RailFoot>
      </Rail>
      <Annotations>
        <RedArrow x={565} y={345} length={127} angle={-72} />
        <RedArrow x={769} y={472} length={127} angle={-87} />
        <RedArrow x={1400} y={243} length={132} angle={-25} />
      </Annotations>
    </Body>
    <StatusBar />
    <Ime>
      CH
      <Icon w={12}>
        <path d="M5 1c7 1 8 8 1 10M5 1c2 3 2 7-4 8 1 1.5 3 2 5 2" />
      </Icon>
      简
    </Ime>
    <Watermark>
      <Icon w={43} h={42}>
        <defs>
          <linearGradient id="swirl" x2="0" y2="1">
            <stop offset="0" stopColor="#4fc0f0" />
            <stop offset="1" stopColor="#2b6fc4" />
          </linearGradient>
          <linearGradient id="leaf" x1="1" x2="0" y2="1">
            <stop offset="0" stopColor="#2fb35e" />
            <stop offset="1" stopColor="#e5dc3c" />
          </linearGradient>
        </defs>
        <path d="M42 1C22-1 2 12 1 26c0 6 5 9 10 8-4-6 2-15 9-18 4-2 8-1 9 1 1-5-6-8-12-4C22 6 32 2 42 1z" fill="url(#swirl)" stroke="none" />
        <path d="M24 15c10-3 18 1 17 9-2 12-20 19-37 16 10-1 22-6 25-15 0-5-3-5-8-3-5 2-8 6-8 10-4-6 3-14 11-17z" fill="url(#leaf)" stroke="none" />
      </Icon>
      <div>
        <SiteName>极光下载站</SiteName>
        <SiteUrl>www.xz7.com</SiteUrl>
      </div>
    </Watermark>
  </Page>
)

/* ---------- styles ---------- */

const Global = createGlobalStyle`
  * {
    box-sizing: border-box;
  }

  body {
    margin: 0;
    overflow: hidden;
  }

  body, button, input, select {
    color: #262d42;
    font-family: 'Noto Sans', 'Noto Sans CJK SC', sans-serif;
    font-size: 12px;
    line-height: 16px;
  }

  button {
    background: transparent;
    border: 0;
    cursor: pointer;
    padding: 0;
    white-space: nowrap;
  }

  svg {
    display: block;
    flex: none;
  }
`

const Page = styled.div`
  background: #f5f7fa;
  border-bottom: 1px solid #3a2a24;
  display: flex;
  flex-direction: column;
  height: 100vh;
  position: relative;
`

const Divider = styled.span`
  background: #d9dbe0;
  flex: none;
  height: ${p => p.$height}px;
  width: 1px;
`

const IconButton = styled.button`
  align-items: center;
  color: ${p => (p.$faded ? '#b4b7bf' : '#3b4561')};
  display: flex;
`

const Title = styled.header`
  align-items: flex-end;
  background: #e2e4e8;
  display: flex;
  flex: none;
  gap: 3px;
  height: 40px;
`

const HomeTab = styled.button`
  background: #648ffb;
  border-radius: 0 3px 0 0;
  color: #fff;
  height: 30px;
  padding-top: 2px;
  width: 68px;
`

const FileTab = styled.button`
  align-items: center;
  background: ${p => (p.$active ? '#fff' : '#d8dade')};
  border-radius: 3px 3px 0 0;
  color: ${p => (p.$active ? '#1f2536' : '#4b5267')};
  display: flex;
  gap: 4px;
  height: 30px;
  padding: 2px 13px 0 10px;
  width: ${p => p.$width}px;
`

const TabEnd = styled.span`
  align-items: center;
  display: flex;
  gap: 12px;
  margin-left: auto;
`

const UnsavedDot = styled.span`
  background: #e39a0c;
  border-radius: 50%;
  height: 6px;
  width: 6px;
`

const DotSpace = styled.span`
  width: 6px;
`

const NewTab = styled.button`
  color: #48546f;
  height: 30px;
  padding: 0 9px;
`

const WindowTools = styled.div`
  align-items: center;
  align-self: stretch;
  display: flex;
  gap: 13px;
  margin-left: auto;
`

const Login = styled.button`
  align-items: center;
  background: #f5a509;
  border-radius: 12px;
  color: #fff;
  display: flex;
  gap: 4px;
  height: 24px;
  padding: 0 2px 0 6px;
`

const WindowButtons = styled.div`
  border-left: 1px solid #cdd0d6;
  display: flex;
  gap: 18px;
  height: 20px;
  margin-left: -4px;
  padding: 0 1px 0 11px;
`

const Menu = styled.nav`
  align-items: center;
  background: #fff;
  display: flex;
  flex: none;
  height: 38px;
  padding: 2px 9px 0 12px;
`

const MenuButton = styled.button`
  align-items: center;
  display: flex;
  gap: 6px;

  & + ${Divider} {
    margin: 0 9px 0 10px;
  }
`

const QuickAccess = styled.div`
  display: flex;
  gap: 9px;
  margin-right: 14px;

  & + ${IconButton} + ${Divider} {
    margin: 0 16px 0 8px;
  }
`

const MenuItems = styled.div`
  display: flex;
  gap: 26px;
  margin-right: 19px;
`

const MenuItem = styled.button`
  color: ${p => (p.$green ? '#1ebb7d' : 'inherit')};
`

const ContextItems = styled.div`
  display: flex;
  gap: 32px;
  margin: 0 19px 0 22px;
`

const ActiveMenu = styled.button`
  background: #20b97c;
  border-radius: 10px;
  color: #fff;
  font-weight: 700;
  height: 20px;
  padding: 0 13px;
`

const Search = styled.label`
  align-items: center;
  color: #8d98b5;
  display: flex;
  gap: 1px;
  margin-left: 18px;

  input {
    border: 0;
    padding: 0;
    width: 130px;
  }

  input::placeholder {
    color: #7c87a5;
  }
`

const MenuRight = styled.div`
  align-items: center;
  display: flex;
  gap: 12px;
  margin-left: auto;

  > ${Divider} {
    margin-left: 3px;
  }

  > ${Divider} + ${IconButton} {
    margin: 0 5px 0 4px;
  }
`

const Share = styled.button`
  align-items: center;
  background: #20b97c;
  border-radius: 4px;
  color: #fff;
  display: flex;
  gap: 5px;
  height: 24px;
  padding: 0 8px 0 9px;
`

const Ribbon = styled.section`
  background: #fff;
  box-shadow: 0 1px 4px rgba(40, 50, 80, 0.16);
  display: flex;
  flex: none;
  height: 64px;
  position: relative;
`

const RibbonGroup = styled.div`
  border-right: 1px solid #e6e7eb;
  display: flex;
  gap: ${p => (p.$tight ? 6 : 11)}px;
  margin-bottom: 2px;
  padding: 0 10px;

  &:first-child {
    padding-left: 9px;
  }
`

const BigButton = styled.button`
  align-items: center;
  display: flex;
  flex-direction: column;
  gap: 6px;
  padding-top: 4px;

  > span {
    align-items: center;
    display: flex;
    gap: 4px;
  }
`

const Gallery = styled.div`
  border: 1px solid #dfe1e8;
  border-radius: 2px;
  display: flex;
  gap: 14px;
  height: 52px;
  margin-top: 2px;
  padding: 7px 0 0 7px;
`

const GalleryMore = styled.button`
  border-left: 1px solid #e6e7eb;
  color: #6b7896;
  height: 50px;
  margin: -7px 0 0 -14px;
  padding: 0 3px;
`

const SelectBox = styled.div`
  height: ${p => p.$height}px;
  position: relative;

  select {
    appearance: none;
    background: #fff;
    border: 1px solid #d5d9e2;
    border-radius: 2px;
    height: 100%;
    padding: 1px 18px 0 2px;
    width: 100%;
  }

  svg {
    position: absolute;
    right: 4px;
    top: calc(50% - 2px);
  }
`

const FormatGroup = styled.div`
  border-right: 1px solid #e6e7eb;
  margin-bottom: 2px;
  padding: 2px 5px 0;
  width: 191px;
`

const FormatRow = styled.div`
  display: flex;
  gap: 9px;
  padding: 9px 0 0 4px;

  button {
    align-items: center;
    display: flex;
    gap: 4px;
  }
`

const Body = styled.main`
  display: flex;
  flex: 1;
  min-height: 0;
  position: relative;
`

const Workbook = styled.section`
  display: flex;
  flex: 1;
  flex-direction: column;
  min-width: 0;
`

const FormulaBar = styled.div`
  display: flex;
  flex: none;
  height: 40px;
  padding: 12px 2px 2px 4px;
`

const NameBox = styled.div`
  align-items: center;
  background: #fff;
  border: 1px solid #d8dbe2;
  border-radius: 2px;
  display: flex;
  padding-right: 2px;
  width: 149px;

  input {
    border: 0;
    flex: 1;
    font-size: 14px;
    min-width: 0;
    padding: 1px 4px 0 0;
    text-align: center;
  }
`

const FxTools = styled.div`
  align-items: center;
  color: #5a6684;
  display: flex;
  gap: 10px;
  margin-left: 46px;
  width: 50px;

  i {
    color: #a6a9b2;
    font-family: 'Liberation Serif', serif;
    font-size: 18px;
  }
`

const FormulaInput = styled.input`
  background: #fff;
  border: 1px solid #d8dbe2;
  border-radius: 3px;
  flex: 1;
  min-width: 0;
`

const Workspace = styled.div`
  display: flex;
  flex: 1;
  min-height: 0;
`

const GridArea = styled.div`
  background: linear-gradient(#f5f7fa 24px, #fff 24px);
  flex: 1;
  min-width: 0;
  overflow: hidden;
  position: relative;
`

const Table = styled.table`
  border-collapse: separate;
  border-spacing: 0;
  table-layout: fixed;
  width: 1448px;
`

const Col = styled.col`
  width: ${p => p.$width}px;
`

const headCell = css`
  background-color: #f5f7fa;
  border-bottom: 1px solid #a8b1cf;
  height: 25px;
  padding: 8px 0 1px;
  position: relative;
`

const Corner = styled.th`
  ${headCell}
  border-right: 1px solid #a8b1cf;

  svg {
    margin-left: 16px;
  }
`

const ColHead = styled.th`
  ${headCell}
  background-image: linear-gradient(transparent 6px, #a8b1cf);
  background-position: right;
  background-repeat: no-repeat;
  background-size: 1px 100%;
  font-size: 14px;
  font-weight: 400;
  line-height: 15px;
`

const HiddenMark = styled.span`
  left: -7px;
  position: absolute;
  top: 6px;
`

const RowHead = styled.th`
  background: linear-gradient(90deg, #f5f7fa, #b5bcd6) bottom / 100% 1px
    no-repeat #f5f7fa;
  border-right: 1px solid #a8b1cf;
  font-size: 14px;
  font-weight: 400;
  height: 42px;
  padding: 2px 3px 0 0;
`

const sizes = {
  title: css`
    font-size: 21px;
    font-weight: 700;
    line-height: 28px;
  `,
  head: css`
    font-size: 15px;
    font-weight: 700;
  `
}

const Cell = styled.td`
  background: ${p =>
    p.$note
      ? 'linear-gradient(225deg, #f00 4px, transparent 4px)'
      : 'transparent'};
  border-bottom: 1px solid ${p => (p.$ink ? '#000' : '#c5cae0')};
  border-right: 1px solid ${p => (p.$ink ? '#000' : '#c5cae0')};
  color: #000;
  font-size: 13px;
  height: 42px;
  padding: 0 0 2px;
  text-align: center;
  ${p => sizes[p.$size]}
`

/* the chart floats over the cells at its anchor */
const Chart = styled.svg`
  fill: #595959;
  font-size: 11px;
  left: 520px;
  position: absolute;
  top: 55px;
`

const FloatTools = styled.div`
  display: flex;
  flex-direction: column;
  gap: 11px;
  left: 1165px;
  position: absolute;
  top: 70px;

  button {
    background: #fff;
    border: 1px solid #dcdee3;
    box-shadow: 1px 2px 4px rgba(0, 0, 0, 0.25);
    height: 28px;
    padding: 3px;
    width: 28px;
  }
`

const VScroll = styled.div`
  align-items: center;
  border-left: 1px solid #dcdfe6;
  color: #8d96b4;
  display: flex;
  flex-direction: column;
  gap: 6px;
  padding: 11px 1px 0 2px;
  width: 17px;
`

const VTrack = styled.div`
  align-items: center;
  background: #e9ebf0;
  display: flex;
  flex: 1;
  flex-direction: column;
  gap: 10px;
  padding: 7px 0 8px;
  width: 14px;

  > svg:last-child {
    margin-top: auto;
  }
`

const VThumb = styled.div`
  background: #d3d6de;
  border-radius: 6px;
  height: 209px;
  width: 12px;
`

const Sheets = styled.div`
  align-items: center;
  border-top: 1px solid #e0e2e8;
  display: flex;
  flex: none;
  height: 23px;
`

const SheetNav = styled.div`
  display: flex;
  gap: 15px;
  padding: 1px 0 0 12px;
  width: 115px;
`

const SheetTabs = styled.div`
  align-self: stretch;
  background: #e6e7ec;
  display: flex;
  padding: 0 0 0 2px;
`

const SheetTab = styled.button`
  background: ${p =>
    p.$active ? '#fff' : p.$orange ? '#f5ae82' : 'transparent'};
  box-shadow: ${p => (p.$active ? 'inset 0 -2px #bcd3ee' : 'none')};
  color: ${p => (p.$active ? '#1ebb7d' : '#464d63')};
  font-weight: ${p => (p.$active ? 700 : 400)};
  padding: 1px ${p => (p.$wide ? 17 : 16)}px 0;
`

const SheetActions = styled.div`
  align-items: center;
  color: #3b4561;
  display: flex;
  gap: 13px;
  padding: 0 6px 0 5px;

  > span {
    margin-left: 6px;
  }
`

const Grip = styled.span`
  border: 1px solid #98a0b8;
  border-width: 0 1px;
  height: 10px;
  width: 4px;
`

const HScroll = styled.div`
  align-items: center;
  background: #e9ebf0;
  display: flex;
  flex: 1;
  gap: 10px;
  height: 14px;
  padding: 0 8px;

  > svg:last-child {
    margin-left: auto;
  }

  & + ${Grip} {
    margin: 0 22px 0 4px;
  }
`

const HThumb = styled.div`
  background: #d3d6de;
  border-radius: 6px;
  height: 12px;
  width: 145px;
`

const Panel = styled.aside`
  border-left: 1px solid #dfe1e7;
  flex: none;
  overflow: hidden;
  width: 260px;
`

const PanelHead = styled.div`
  display: flex;
  justify-content: space-between;
  padding: 8px 8px 9px 9px;

  button {
    align-items: center;
    color: #4b5267;
    display: flex;
    gap: 4px;
  }
`

const PanelHeadIcons = styled.div`
  align-items: center;
  color: #3b4561;
  display: flex;
  gap: 12px;
`

const PanelTabs = styled.div`
  border-bottom: 1px solid #dfe1e7;
  display: flex;
  gap: 8px;
  height: 29px;
  padding-left: 10px;
`

const PanelTab = styled.button`
  align-items: center;
  border: 1px solid ${p => (p.$active ? '#dfe1e7' : 'transparent')};
  border-bottom: 0;
  color: ${p => (p.$active ? '#262d42' : '#4b5267')};
  display: flex;
  font-weight: ${p => (p.$active ? 700 : 400)};
  gap: 7px;
  height: 29px;
  padding: 0 13px;
  ${p => p.$active && 'background: #f5f7fa; padding-right: 14px;'}
`

const SubTabs = styled.div`
  border-bottom: 1px solid #dfe1e7;
  display: flex;
  gap: 20px;
  height: 54px;
  margin-right: 8px;
  padding: 6px 0 0 6px;
`

const SubTab = styled.button`
  align-items: center;
  color: ${p => (p.$active ? '#1ba971' : '#7580a0')};
  display: flex;
  flex-direction: column;
  font-weight: ${p => (p.$active ? 700 : 400)};
  gap: 6px;
  position: relative;

  &::after {
    background: ${p => (p.$active ? '#1ba971' : 'transparent')};
    bottom: -1px;
    content: '';
    height: 2px;
    left: -4px;
    position: absolute;
    right: -4px;
  }
`

const SectionTitle = styled.button`
  align-items: center;
  color: ${p => (p.$open ? '#1ba971' : 'inherit')};
  display: flex;
  font-weight: ${p => (p.$open ? 700 : 400)};
  gap: 5px;
  height: 20px;
  margin-left: 12px;
  ${p => p.$open && 'margin-top: 20px;'}
`

const PanelBody = styled.div`
  padding: 15px 16px 0 24px;
`

const GroupTitle = styled.div`
  margin-bottom: 3px;
`

const CrossTitle = styled.div`
  margin: 11px 0 3px;
`

const FieldGrid = styled.div`
  align-items: center;
  display: grid;
  gap: 5px 10px;
  grid-template-columns: 51px 95px 43px;
  padding-left: 10px;

  > span {
    text-align: center;
  }
`

const NumberInput = styled.input`
  background: #fff;
  border: 1px solid #767676;
  height: 23px;
  padding: 0 3px;
  width: 100%;
`

const Reset = styled.button`
  background: ${p => (p.$pressed ? '#e1e1e1' : '#fff')};
  border: 1px solid ${p => (p.$pressed ? '#adadad' : '#dfe1e7')};
  color: ${p => (p.$pressed ? '#000' : 'inherit')};
  height: ${p => p.$height}px;
`

const OptionRow = styled.div`
  align-items: center;
  display: flex;
  height: 28px;
  justify-content: space-between;
  padding-left: ${p => (p.$indent ? 12 : 0)}px;
`

const Option = styled.label`
  align-items: center;
  color: ${p => (p.$disabled ? '#a9acb5' : 'inherit')};
  display: flex;
  gap: 4px;
  white-space: nowrap;

  u {
    text-underline-offset: 2px;
  }
`

const Radio = styled.input.attrs({ type: 'radio' })`
  appearance: none;
  background: #fff;
  border: 1px solid #a4a8b3;
  border-radius: 50%;
  height: 14px;
  margin: 0;
  padding: 2px;
  width: 14px;

  &:checked {
    background: #262d42 content-box;
    box-shadow: inset 0 0 0 2px #fff;
  }
`

const Check = styled.input.attrs({ type: 'checkbox' })`
  appearance: none;
  background: #fff;
  border: 1px solid #8f939f;
  border-radius: 2px;
  height: 14px;
  margin: 0;
  width: 14px;

  &:disabled {
    background: #f5f7fa;
    border-color: #d3d5db;
  }
`

const DisabledInput = styled.input`
  background: #f0f0f0;
  border: 1px solid #c9c9c9;
  box-shadow: inset 0 0 0 1px #fff;
  color: #9a9da6;
  height: 23px;
  padding: 0 4px;
  width: ${p => p.$width}px;
`

const UnitSelect = styled(SelectBox)`
  margin-right: 1px;
  width: 89px;

  select {
    padding-left: 4px;
  }
`

const BaseLabel = styled.label`
  align-items: center;
  display: flex;
  gap: 6px;
`

const Folded = styled.div`
  align-items: flex-start;
  display: flex;
  flex-direction: column;
  gap: 35px;
  padding-top: 22px;
`

const Rail = styled.aside`
  align-items: flex-end;
  border-left: 1px solid #dfe1e7;
  display: flex;
  flex: none;
  flex-direction: column;
  gap: 4px;
  padding-top: 11px;
  width: 38px;
`

const RailHandle = styled.span`
  border: 1px solid #cdd0d8;
  border-width: 1px 0;
  height: 4px;
  margin: 0 5px 9px 0;
  width: 20px;
`

const RailButton = styled.button`
  align-items: center;
  background: ${p => (p.$active ? '#dce0e8' : 'transparent')};
  border-radius: 3px 0 0 3px;
  color: ${p => (p.$faded ? '#9aa0ae' : '#3b4561')};
  display: flex;
  height: 32px;
  justify-content: center;
  width: 31px;
`

const RailFoot = styled.div`
  border-top: 1px solid #dfe1e7;
  margin-top: auto;
  padding: 21px 6px 17px 14px;
`

const Annotations = styled.svg`
  fill: #f00;
  filter: drop-shadow(2px 3px 2px rgba(0, 0, 0, 0.55));
  height: 100%;
  left: 0;
  pointer-events: none;
  position: absolute;
  stroke: #a11212;
  stroke-width: 0.6px;
  top: 0;
  width: 100%;
`

const Status = styled.footer`
  align-items: center;
  border-top: 1px solid #dfe1e7;
  display: flex;
  flex: none;
  gap: 14px;
  height: 28px;
  padding: 0 9px 0 12px;
`

const StatusRight = styled.div`
  align-items: center;
  color: #262d42;
  display: flex;
  gap: 12px;
  margin-left: auto;
`

const EyeCare = styled.span`
  align-items: center;
  display: flex;
  gap: 5px;
  padding-right: 2px;
`

const ZoomValue = styled.span`
  align-items: center;
  display: flex;
  gap: 5px;
`

const ViewButton = styled.button`
  align-items: center;
  background: ${p => (p.$active ? '#dadfe8' : 'transparent')};
  border-radius: 2px;
  display: flex;
  height: 24px;
  justify-content: center;
  margin: 0 -5px;
  width: 24px;
`

const Zoom = styled.input.attrs({ type: 'range' })`
  appearance: none;
  background: linear-gradient(90deg, #3b4a6b 50%, #c5cad6 50%) center / 100% 2px
    no-repeat;
  height: 14px;
  margin: 0;
  width: 140px;

  &::-webkit-slider-thumb {
    appearance: none;
    background: #f5f7fa;
    border: 1px solid #555c6e;
    border-radius: 50%;
    height: 12px;
    width: 12px;
  }
`

const Ime = styled.div`
  align-items: center;
  background: #fff;
  border: 1px solid #666;
  border-radius: 6px;
  bottom: 57px;
  box-shadow: 0 1px 3px rgba(0, 0, 0, 0.5);
  display: flex;
  gap: 3px;
  height: 28px;
  justify-content: center;
  position: absolute;
  right: 131px;
  width: 62px;
`

const Watermark = styled.div`
  align-items: center;
  bottom: 5px;
  display: flex;
  opacity: 0.75;
  pointer-events: none;
  position: absolute;
  right: 11px;
`

const SiteName = styled.div`
  color: #3c8ad6;
  font-size: 21px;
  font-weight: 700;
  line-height: 26px;
`

const SiteUrl = styled.div`
  color: #35ad5b;
  font-family: 'Liberation Sans', sans-serif;
  font-size: 16px;
  font-weight: 700;
  line-height: 20px;
`

export default App
